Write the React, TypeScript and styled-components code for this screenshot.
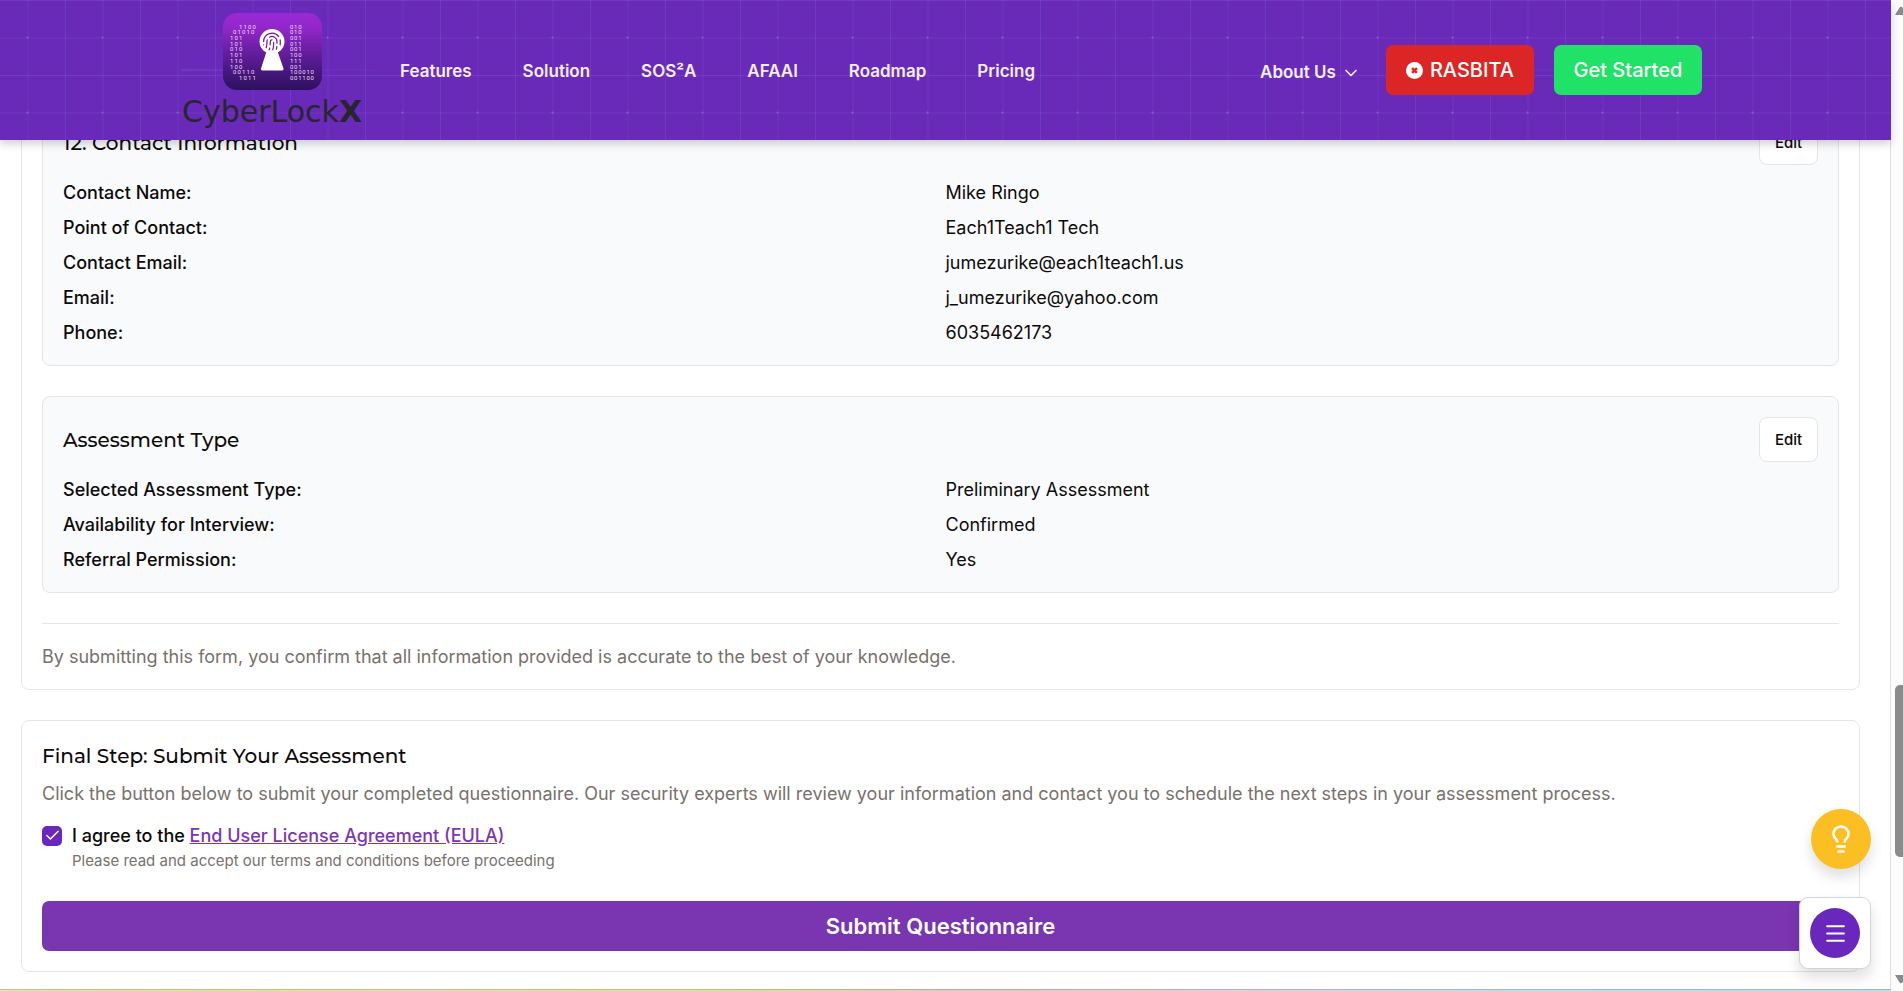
import React from "react";
import styled, { createGlobalStyle } from "styled-components";
import { Check, ChevronDown, Fingerprint, Lightbulb, Menu } from "lucide-react";

const GlobalStyle = createGlobalStyle`
  *, *::before, *::after { box-sizing: border-box; }
  body {
    margin: 0;
    background: #fff;
    color: #0c0a09;
    font-family: Inter, "Liberation Sans", sans-serif;
    font-size: 18px;
    line-height: 25px;
  }
  h2, h3, p, dl, dd, dt { margin: 0; font-weight: 400; }
  button, input { font: inherit; margin: 0; }
`;

const Shell = styled.div`
  display: flex;
  min-height: 100vh;
`;

const Page = styled.div`
  position: relative;
  flex: 1;
  min-width: 0;
  display: flex;
  flex-direction: column;
  border-right: 1px solid #e0e0e0;
`;

const Header = styled.header`
  position: absolute;
  inset: 0 -1px auto 0;
  z-index: 2;
  height: 140px;
  background-color: #6929b9;
  background-image:
    linear-gradient(rgba(140, 160, 220, 0.16) 1px, transparent 1px),
    linear-gradient(90deg, rgba(140, 160, 220, 0.16) 1px, transparent 1px),
    linear-gradient(rgba(140, 150, 220, 0.07) 2px, transparent 2px),
    linear-gradient(90deg, rgba(140, 150, 220, 0.07) 2px, transparent 2px);
  background-size: 75px 75px;
  background-position: 65px 0, 65px 0, 27px 37px, 27px 37px;
  box-shadow: 0 4px 8px rgba(0, 0, 0, 0.18);
`;

const MarksSvg = styled.svg`
  position: absolute;
  inset: 0;
  width: 100%;
  height: 100%;
  pointer-events: none;
  z-index: -1;
`;

const Bar = styled.div`
  height: 100%;
  padding: 0 10% 0 181px;
  display: flex;
  align-items: center;
  background: linear-gradient(
      90deg,
      rgba(140, 150, 220, 0.14),
      transparent 15%,
      transparent 80%,
      rgba(140, 150, 220, 0.14)
    )
    content-box 0 69px / 100% 2px no-repeat;
`;

const Brand = styled.a`
  width: 182px;
  height: 140px;
  padding-top: 13px;
  display: flex;
  flex-direction: column;
  align-items: center;
  color: #28252e;
  text-decoration: none;
`;

const Wordmark = styled.span`
  font-family: "DejaVu Sans", sans-serif;
  font-size: 30px;
  line-height: 44px;
  white-space: nowrap;
`;

const Nav = styled.nav`
  display: flex;
  gap: 51px;
  margin-left: 37px;
  padding-top: 3px;
`;

const NavLink = styled.a`
  color: #f3eefa;
  font-size: 17px;
  font-weight: 600;
  text-decoration: none;
  white-space: nowrap;
`;

const Actions = styled.div`
  display: flex;
  align-items: center;
  margin-left: auto;
  gap: 20px;
`;

const AboutButton = styled.button`
  display: flex;
  align-items: center;
  gap: 5px;
  margin-right: 5px;
  padding: 5px 0 0;
  border: 0;
  background: none;
  color: #f3eefa;
  font-size: 17px;
  font-weight: 600;
`;

const ActionButton = styled.button<{ $color: string }>`
  width: 148px;
  height: 50px;
  display: flex;
  align-items: center;
  justify-content: center;
  gap: 7px;
  padding: 0;
  border: 0;
  border-radius: 7px;
  background: ${(p) => p.$color};
  color: #fff;
  font-size: 20px;
  font-weight: 500;
  white-space: nowrap;
`;

const Main = styled.main`
  flex: 1;
  display: flex;
  flex-direction: column;
  gap: 30px;
  padding: 78px 30px 17px 21px;
`;

const Card = styled.section`
  display: flex;
  flex-direction: column;
  padding: 20px;
  border: 1px solid #e5e5e5;
  border-radius: 8px;
`;

const Panels = styled.div`
  display: flex;
  flex-direction: column;
  gap: 30px;
`;

const Panel = styled.section`
  padding: 20px;
  border: 1px solid #e7e5e4;
  border-radius: 8px;
  background: #f9fafb;
`;

const PanelHead = styled.div`
  display: flex;
  align-items: center;
  justify-content: space-between;
  margin-bottom: 15px;
`;

const Title = styled.h3`
  && { font-weight: 500; }
  font-family: Montserrat, Inter, sans-serif;
  font-size: 20px;
  line-height: 30px;
`;

const EditButton = styled.button`
  width: 59px;
  height: 45px;
  padding: 0;
  border: 1px solid #e7e5e4;
  border-radius: 8px;
  background: #fff;
  color: #0c0a09;
  font-size: 15px;
  font-weight: 500;
`;

const Facts = styled.dl`
  display: grid;
  grid-template-columns: 1fr 1fr;
  gap: 10px;
`;

const Term = styled.dt`
  && { font-weight: 500; }
`;

const Muted = styled.p`
  color: #78716c;
`;

const Notice = styled(Muted)`
  && { margin-top: 30px; }
  padding-top: 20px;
  border-top: 1px solid #e5e5e5;
`;

const Intro = styled(Muted)`
  && { margin: 10px 0 17px; }
`;

const Agreement = styled.div`
  display: grid;
  grid-template-columns: 20px 1fr;
  column-gap: 10px;
  align-items: center;
`;

const CheckWrap = styled.span`
  display: grid;
  place-items: center;
  & > * { grid-area: 1 / 1; }
  & > svg { pointer-events: none; color: #fff; }
`;

const CheckBox = styled.input`
  appearance: none;
  width: 20px;
  height: 20px;
  border-radius: 5px;
  background: #6927bb;
`;

const AgreeLabel = styled.label`
  font-weight: 500;
`;

const AgreeLink = styled.a`
  color: #7c35b4;
  font-weight: 500;
  text-decoration: underline;
`;

const Hint = styled(Muted)`
  grid-column: 2;
  font-size: 15px;
`;

const SubmitButton = styled.button`
  height: 50px;
  margin-top: 28px;
  border: 0;
  border-radius: 7px;
  background: #7a35b0;
  color: #fff;
  font-size: 22px;
  font-weight: 600;
`;

const RainbowEdge = styled.div`
  height: 2px;
  margin-right: -1px;
  background:
    linear-gradient(rgba(60, 60, 60, 0.25) 1px, transparent 1px),
    linear-gradient(90deg, #f5e0c0, #ece69a 12%, #f4dfb8 22%, #e6e2a0 38%, #e8c8c0 50%, #ead0d8 64%, #c8dcec 80%, #c4d8e6);
`;

const TipButton = styled.button`
  position: absolute;
  right: 19px;
  bottom: 122px;
  z-index: 3;
  width: 60px;
  height: 60px;
  display: grid;
  place-items: center;
  padding: 0;
  border: 0;
  border-radius: 50%;
  background: #fbbf24;
  color: #fff;
  box-shadow: 0 8px 14px rgba(0, 0, 0, 0.13);
`;

const Dock = styled.div`
  position: absolute;
  right: 19px;
  bottom: 22px;
  z-index: 3;
  width: 72px;
  height: 72px;
  display: grid;
  place-items: center;
  border: 1px solid #d1d5db;
  border-radius: 9px;
  background: #fff;
  box-shadow: 0 8px 14px rgba(0, 0, 0, 0.13);
`;

const MenuButton = styled.button`
  width: 50px;
  height: 50px;
  display: grid;
  place-items: center;
  padding: 0;
  border: 0;
  border-radius: 50%;
  background: #6927bb;
  color: #fff;
`;

const Track = styled.div`
  width: 12px;
  display: flex;
  flex-direction: column;
  justify-content: space-between;
  padding: 6px 0 7px 3px;
  overflow: hidden;
  background: #fcfcfc;
`;

const Runner = styled.div`
  flex: 1;
  display: flex;
  flex-direction: column;
`;

const Spacer = styled.div<{ $grow: number }>`
  flex: ${(p) => p.$grow} 0 0;
`;

const Thumb = styled.div`
  flex: 172 0 0;
  width: 16px;
  margin-left: 1px;
  border-radius: 5px;
  background: #8b8b8b;
`;

const leftDigits: [number, string][] = [
  [16, "1100"], [10, "01010"], [7, "101"], [7, "101"], [7, "010"],
  [7, "101"], [7, "110"], [7, "100"], [10, "00110"], [16, "1011"],
];
const rightDigits = ["010", "010", "001", "011", "001", "100", "111", "001", "100010", "001100"];

function Digits({ x, row, pitch, text }: { x: number; row: number; pitch: number; text: string }) {
  return (
    <text y={15.6 + row * 5.7} x={[...text].map((_, i) => x + i * pitch).join(" ")}>
      {text}
    </text>
  );
}

function LogoMark() {
  return (
    <svg width="99" height="77" viewBox="0 0 99 77" aria-hidden="true">
      <defs>
        <linearGradient id="badge" x1="0" y1="0" x2="0" y2="1">
          <stop offset="0" stopColor="#9a29d6" />
          <stop offset="0.2" stopColor="#9127c9" />
          <stop offset="0.6" stopColor="#5a1b93" />
          <stop offset="1" stopColor="#2c115e" />
        </linearGradient>
      </defs>
      <rect width="99" height="77" rx="14" fill="url(#badge)" />
      <g fill="#f0dcfa" fontFamily="Roboto, sans-serif" fontSize="6">
        {leftDigits.map(([x, t], i) => (
          <Digits key={i} x={x} row={i} pitch={4.5} text={t} />
        ))}
        {rightDigits.map((t, i) => (
          <Digits key={i} x={67} row={i} pitch={4.1} text={t} />
        ))}
      </g>
      <path d="M44 37h10l6.5 18.5q.5 2-1.500 2H39.500q-2 0-1.500-2z" fill="#fff" />
      <circle cx="49" cy="28.500" r="12.500" fill="#fff" />
      <Fingerprint x="39" y="18.500" width="20" height="20" color="#6a1fa5" strokeWidth={1.5} />
    </svg>
  );
}

function CrossBadge() {
  return (
    <svg width="17" height="17" viewBox="0 0 16 16" aria-hidden="true">
      <circle cx="8" cy="8" r="8" fill="#fff" />
      <path d="M5.700 5.700l4.600 4.600M10.300 5.700l-4.600 4.600" stroke="#dc2626" strokeWidth="2.400" />
    </svg>
  );
}

function Marks() {
  return (
    <MarksSvg aria-hidden="true">
      <defs>
        <pattern id="marks" x="26" y="36" width="75" height="75" patternUnits="userSpaceOnUse">
          <path d="M0 1.500h3M1.500 0v3" stroke="#a58be0" strokeOpacity="0.25" />
        </pattern>
      </defs>
      <rect width="100%" height="100%" fill="url(#marks)" />
    </MarksSvg>
  );
}

const sections = [
  {
    title: "12. Contact Information",
    facts: [
      ["Contact Name:", "Mike Ringo"],
      ["Point of Contact:", "Each1Teach1 Tech"],
      ["Contact Email:", "jumezurike@each1teach1.us"],
      ["Email:", "j_umezurike@yahoo.com"],
      ["Phone:", "6035462173"],
    ],
  },
  {
    title: "Assessment Type",
    facts: [
      ["Selected Assessment Type:", "Preliminary Assessment"],
      ["Availability for Interview:", "Confirmed"],
      ["Referral Permission:", "Yes"],
    ],
  },
];

const navItems = ["Features", "Solution", "SOS²A", "AFAAI", "Roadmap", "Pricing"];

export default function App() {
  return (
    <Shell>
      <GlobalStyle />
      <Page>
        <Header>
          <Marks />
          <Bar>
            <Brand href="#">
              <LogoMark />
              <Wordmark>CyberLock<b>X</b></Wordmark>
            </Brand>
            <Nav>
              {navItems.map((n) => (
                <NavLink key={n} href="#">{n}</NavLink>
              ))}
            </Nav>
            <Actions>
              <AboutButton>
                About Us
                <ChevronDown size={20} strokeWidth={2} />
              </AboutButton>
              <ActionButton $color="#dc2626"><CrossBadge />RASBITA</ActionButton>
              <ActionButton $color="#20e266">Get Started</ActionButton>
            </Actions>
          </Bar>
        </Header>
        <Main>
          <Card>
            <Panels>
              {sections.map((s) => (
                <Panel key={s.title}>
                  <PanelHead>
                    <Title>{s.title}</Title>
                    <EditButton>Edit</EditButton>
                  </PanelHead>
                  <Facts>
                    {s.facts.map(([k, v]) => (
                      <React.Fragment key={k}>
                        <Term>{k}</Term>
                        <dd>{v}</dd>
                      </React.Fragment>
                    ))}
                  </Facts>
                </Panel>
              ))}
            </Panels>
            <Notice>By submitting this form, you confirm that all information provided is accurate to the best of your knowledge.</Notice>
          </Card>
          <Card>
            <Title>Final Step: Submit Your Assessment</Title>
            <Intro>
              Click the button below to submit your completed questionnaire. Our security experts will review your
              information and contact you to schedule the next steps in your assessment process.
            </Intro>
            <Agreement>
              <CheckWrap>
                <CheckBox id="eula" type="checkbox" defaultChecked />
                <Check size={17} strokeWidth={2} />
              </CheckWrap>
              <AgreeLabel htmlFor="eula">
                I agree to the <AgreeLink href="#">End User License Agreement (EULA)</AgreeLink>
              </AgreeLabel>
              <Hint>Please read and accept our terms and conditions before proceeding</Hint>
            </Agreement>
            <SubmitButton>Submit Questionnaire</SubmitButton>
          </Card>
        </Main>
        <RainbowEdge />
        <TipButton aria-label="Tips"><Lightbulb size={30} strokeWidth={2} /></TipButton>
        <Dock>
          <MenuButton aria-label="Menu"><Menu size={25} strokeWidth={2} /></MenuButton>
        </Dock>
      </Page>
      <Track>
        <svg width="14" height="10" viewBox="0 0 14 10"><path d="M1 9L5.500 1.500Q7 0 8.500 1.500L13 9z" fill="#8b8b8b" /></svg>
        <Runner>
          <Spacer $grow={669} />
          <Thumb />
          <Spacer $grow={117} />
        </Runner>
        <svg width="14" height="10" viewBox="0 0 14 10"><path d="M1 1L5.500 8.500Q7 10 8.500 8.500L13 1z" fill="#8b8b8b" /></svg>
      </Track>
    </Shell>
  );
}
